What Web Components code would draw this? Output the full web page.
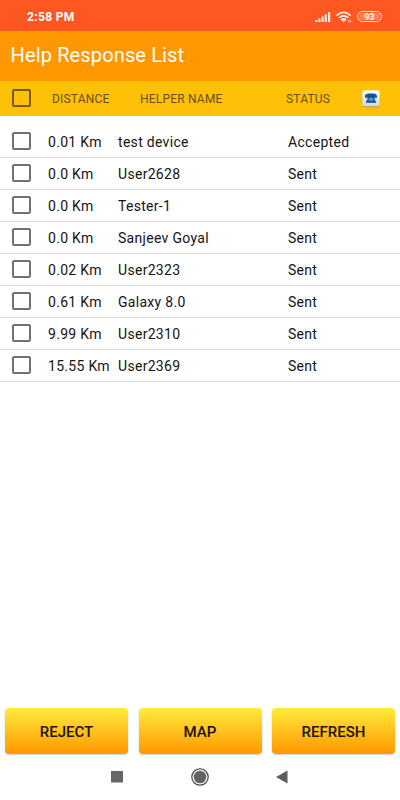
<!DOCTYPE html>
<html lang="en">
<head>
<meta charset="utf-8">
<title>Help Response List</title>
<style>
html,body{margin:0;height:100%;background:#fff}
body{font-family:Roboto,"Noto Sans",sans-serif;color:#141414;overflow:hidden}
</style>
</head>
<body>
<help-screen></help-screen>
<script>
const define = (name, html) => customElements.define(name, class extends HTMLElement {
  constructor() {
    super();
    const t = document.createElement('template');
    t.innerHTML = html;
    this.attachShadow({mode: 'open'}).append(t.content.cloneNode(true));
  }
});

define('check-box', `<style>
:host{display:block;box-sizing:border-box;width:19px;height:18px;border:2px solid var(--box,#717171);border-radius:2px}
</style>`);

define('status-bar', `<style>
:host{display:flex;align-items:center;box-sizing:border-box;height:31px;padding:2px 18px 0 27px;background:#ff5722;color:#fff}
.time{flex:1;font-size:12px;font-weight:700;letter-spacing:.35px;line-height:14px}
svg{display:block}
.signal{margin-right:5px}
.wifi{margin-right:5px}
.battery{box-sizing:border-box;width:25px;height:11px;border:1px solid #ffe3da;border-radius:6px;padding:1px}
.battery span{display:block;height:7px;border-radius:4px;background:#ff8058;font-size:8.500px;line-height:8px;font-weight:700;text-align:center}
</style>
<span class="time">2:58 PM</span>
<svg class="signal" width="16" height="12" viewBox="0 0 16 12" fill="#ffe9e2"><path d="M.2 9h2.200v2H.2zM3.300 7.500h2.200V11H3.300zM6.500 5.500h2.200V11H6.500zM9.700 3.500h2.200V11H9.700zM13 1h2.200v10H13z"/></svg>
<svg class="wifi" width="16" height="12" viewBox="0 0 16 12" fill="none" stroke="#ffeee8" stroke-width="1.700"><path d="M.6 4.600Q7.500-1.700 14.600 4.600M2.900 6.900Q7.500 2.800 12.300 6.900M5.200 9Q7.500 7 10 9"/><path d="M5.900 9.300h3.400L7.600 11.500z" fill="#ffeee8" stroke="none"/><path d="M12.700 9v2.500M14.400 9v2.500" stroke-width="1" opacity=".75"/></svg>
<div class="battery"><span>93</span></div>`);

define('app-bar', `<style>
:host{display:flex;align-items:center;box-sizing:border-box;height:50px;padding:0 10.500px 2px;background:#ff9800;color:#fff;font-size:20px;letter-spacing:.14px}
</style><slot></slot>`);

define('phone-icon', `<style>:host{display:block}svg{display:block}</style>
<svg width="18" height="18" viewBox="0 0 18 18">
<defs><linearGradient id="p" x2="0" y2="1"><stop stop-color="#fafafa"/><stop offset="1" stop-color="#d5d9dc"/></linearGradient><linearGradient id="b" x2="0" y2="1"><stop stop-color="#12386c"/><stop offset=".55" stop-color="#1c75b8"/><stop offset="1" stop-color="#0b4380"/></linearGradient></defs>
<rect x=".4" y="1" width="17.200" height="16.300" rx="2.500" fill="#b99b37"/>
<rect x=".3" y=".3" width="17.400" height="15.900" rx="2.500" fill="url(#p)"/>
<path d="M3 6.700C3 3.300 5.500 3.400 9 3.400s6-.1 6 3.300v1h-3.800V6H6.800v1.700H3z" fill="#1d5590"/>
<path d="M6.500 5.500h5L14.200 12.800H3.800z" fill="url(#b)"/>
<circle cx="9" cy="9.300" r="1.700" fill="#65b4dc"/><circle cx="9" cy="9.300" r=".8" fill="#1767a7"/>
</svg>`);

define('list-header', `<style>
:host{display:grid;grid-template-columns:52px 88px 146px 76px auto;align-items:center;box-sizing:border-box;height:35px;background:#ffc107;color:#645013;font-size:12px;letter-spacing:.2px}
check-box{margin-left:12px;margin-top:-1px;--box:#76590b}
</style><check-box></check-box><span>DISTANCE</span><span>HELPER NAME</span><span>STATUS</span><phone-icon></phone-icon>`);

define('helper-row', `<style>
:host{display:grid;grid-template-columns:48px 70px 170px 1fr;align-items:center;box-sizing:border-box;height:32px;border-bottom:1px solid #dedede;font-size:14px;letter-spacing:.3px;white-space:nowrap}
check-box{margin-left:12px;margin-top:-1px}
</style><check-box></check-box><slot name="distance"></slot><slot name="name"></slot><slot name="status"></slot>`);

define('action-button', `<style>
:host{display:flex;flex:1;align-items:center;justify-content:center;height:46px;border-radius:4px;background:linear-gradient(#ffeb3b,#ff9800);box-shadow:0 1px 2px #0003;font-size:15px;font-weight:500;color:#17120a;padding-top:1px;box-sizing:border-box}
</style><slot></slot>`);

define('nav-bar', `<style>
:host{display:flex;align-items:center;height:46px;padding-left:111px}
svg{display:block}
.home{margin:0 67px 0 68px}
</style>
<svg width="12" height="12"><path d="M0 0h12v11.500H0z" fill="#666"/></svg>
<svg class="home" width="18" height="18" viewBox="0 0 18 18"><circle cx="9" cy="9" r="8.200" fill="none" stroke="#444" stroke-width="1.200"/><circle cx="9" cy="9" r="6.300" fill="#636363"/></svg>
<svg width="12" height="14"><path d="M0 7 11.500.5v13z" fill="#5d5d5d"/></svg>`);

const rows = [['0.01 Km','test device','Accepted'],['0.0 Km','User2628','Sent'],['0.0 Km','Tester-1','Sent'],['0.0 Km','Sanjeev Goyal','Sent'],['0.02 Km','User2323','Sent'],['0.61 Km','Galaxy 8.0','Sent'],['9.99 Km','User2310','Sent'],['15.55 Km','User2369','Sent']];
define('help-screen', `<style>
:host{display:flex;flex-direction:column;height:800px;width:400px}
main{flex:1;padding-top:10px}
.actions{display:flex;gap:10.500px;padding:0 5px}
</style>
<status-bar></status-bar><app-bar>Help Response List</app-bar><list-header></list-header>
<main>${rows.map(([d,n,s]) => `<helper-row><span slot="distance">${d}</span><span slot="name">${n}</span><span slot="status">${s}</span></helper-row>`).join('')}</main>
<div class="actions"><action-button>REJECT</action-button><action-button>MAP</action-button><action-button>REFRESH</action-button></div>
<nav-bar></nav-bar>`);
</script>
</body>
</html>
